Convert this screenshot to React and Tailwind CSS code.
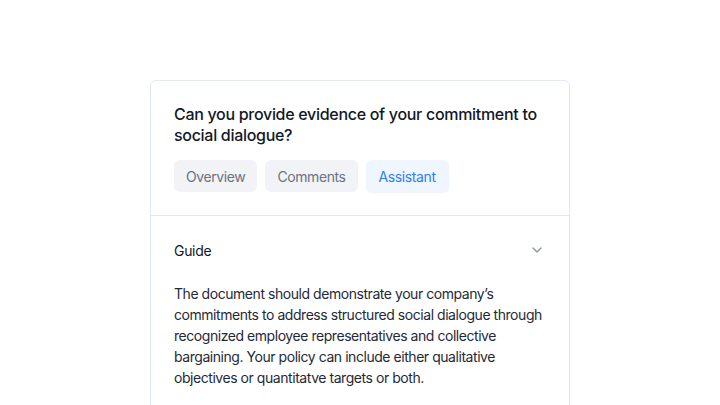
import React from "react";

export default function App() {
  return (
    <div className="w-[720px] h-[405px] bg-white overflow-hidden flex justify-center pt-[80px]" style={{ fontFamily: "Inter, 'Noto Sans', sans-serif" }}>
      <div className="w-[420px] h-[400px] border border-[#e2e8f0] rounded-md bg-white">
        <div className="px-[23px] pt-[23px] pb-[23px] border-b border-[#e2e8f0]">
          <h1 className="text-[16px] leading-[21px] font-medium text-[#111827] tracking-[-0.3px]">
            Can you provide evidence of your commitment to social dialogue?
          </h1>
          <div className="flex gap-2 mt-[14px]">
            <button className="h-8 px-3 rounded-md bg-[#f1f3f6] text-[#6b7280] text-[14px] tracking-[-0.4px]">Overview</button>
            <button className="h-8 px-3 rounded-md bg-[#f1f3f6] text-[#6b7280] text-[14px] tracking-[-0.4px]">Comments</button>
            <button className="h-8 px-[13px] rounded-md bg-[#eff6ff] text-[#2f7df6] text-[14px] tracking-[-0.4px] shadow-[0_1px_2px_rgba(0,0,0,0.06)]">Assistant</button>
          </div>
        </div>
        <div className="px-[23px] pt-[23px]">
          <div className="flex items-center justify-between h-[22px]">
            <span className="text-[14px] text-[#111827] tracking-[-0.3px]">Guide</span>
            <svg width="16" height="16" viewBox="0 0 24 24" fill="none" stroke="#8b93a3" strokeWidth="2" strokeLinecap="round" strokeLinejoin="round" className="mr-[1px]">
              <path d="M6 9l6 6 6-6" />
            </svg>
          </div>
          <p className="mt-[22px] text-[14px] leading-[21px] text-[#1f2937] tracking-[-0.45px]">
            The document should demonstrate your company’s commitments to address structured social dialogue through recognized employee representatives and collective bargaining. Your policy can include either qualitative objectives or quantitatve targets or both.
          </p>
        </div>
      </div>
    </div>
  );
}
